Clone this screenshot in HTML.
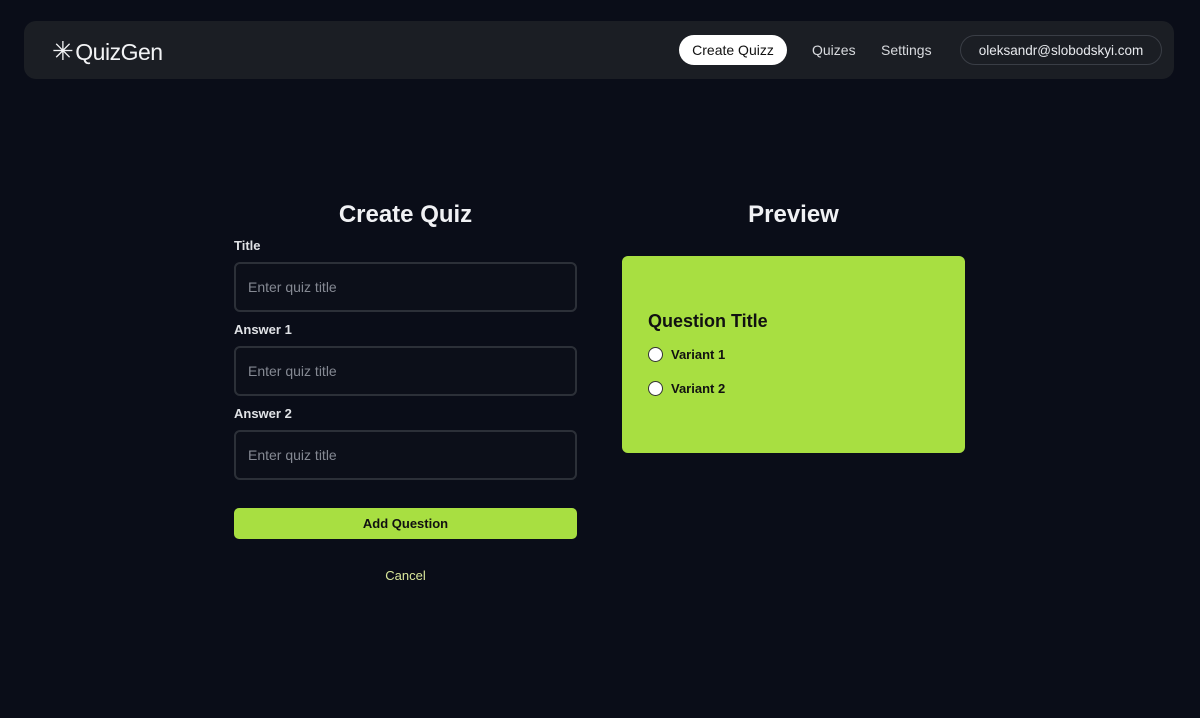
<!DOCTYPE html>
<html><head><meta charset="utf-8"><style>
*{box-sizing:border-box;margin:0;padding:0}
body{width:1200px;height:718px;background:#0a0d18;font-family:"Liberation Sans",sans-serif;color:#e8eaee;position:relative;overflow:hidden}
.nav{position:absolute;left:24px;top:21px;width:1150px;height:58px;background:#1b1e24;border-radius:12px}
.logo{position:absolute;left:28px;top:15px;font-size:23px;color:#f2f3f5;letter-spacing:-0.5px}
.logo span{font-size:26px;margin-right:2px}
.btn{position:absolute;top:14px;height:30px;line-height:30px;font-size:14px}
.l{position:absolute;font-size:13px;font-weight:bold;color:#e0e2e6}
.inp{position:absolute;left:234px;width:343px;height:50px;border:2px solid #2c3038;border-radius:6px;background:#0c0f19;font-size:14px;color:#858993;padding:15px 0 0 12px}
.radio{position:absolute;left:648px;width:15px;height:15px;border-radius:50%;background:#fff;border:1px solid #333}
.v{position:absolute;left:671px;font-size:13px;font-weight:bold;color:#111}
</style></head><body>
<div class="nav">
<div class="logo"><span>✳</span>QuizGen</div>
<div class="btn" style="left:655px;width:108px;background:#fff;color:#111;border-radius:15px;text-align:center">Create Quizz</div>
<div class="btn" style="left:788px;color:#d8dade">Quizes</div>
<div class="btn" style="left:857px;color:#d8dade">Settings</div>
<div class="btn" style="left:936px;width:202px;border:1px solid #3a3e46;border-radius:15px;text-align:center;color:#e8eaee;font-size:13.5px">oleksandr@slobodskyi.com</div>
</div>
<div style="position:absolute;left:234px;width:343px;top:201px;text-align:center;font-size:24px;font-weight:bold;color:#f0f1f4">Create Quiz</div>
<div style="position:absolute;left:622px;width:343px;top:201px;text-align:center;font-size:24px;font-weight:bold;color:#f0f1f4">Preview</div>
<div class="l" style="left:234px;top:238px">Title</div>
<div class="inp" style="top:262px">Enter quiz title</div>
<div class="l" style="left:234px;top:322px">Answer 1</div>
<div class="inp" style="top:346px">Enter quiz title</div>
<div class="l" style="left:234px;top:406px">Answer 2</div>
<div class="inp" style="top:430px">Enter quiz title</div>
<div style="position:absolute;left:234px;top:508px;width:343px;height:31px;background:#a8df41;border-radius:5px;text-align:center;line-height:31px;font-size:13px;font-weight:bold;color:#111">Add Question</div>
<div style="position:absolute;left:234px;width:343px;top:568px;text-align:center;font-size:13px;color:#d9e79a">Cancel</div>
<div style="position:absolute;left:622px;top:256px;width:343px;height:197px;background:#a8df41;border-radius:6px"></div>
<div style="position:absolute;left:648px;top:311px;font-size:18px;font-weight:bold;color:#111">Question Title</div>
<div class="radio" style="top:347px"></div><div class="v" style="top:347px">Variant 1</div>
<div class="radio" style="top:381px"></div><div class="v" style="top:381px">Variant 2</div>
</body></html>
